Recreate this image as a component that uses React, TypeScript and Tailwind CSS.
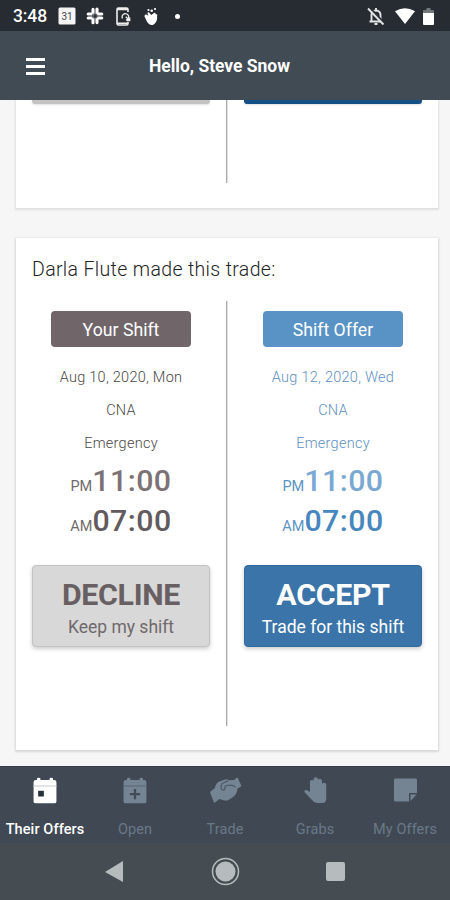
import React from "react";

type Tone = "gray" | "blue";

const toneStyles = {
  gray: { badge: "bg-[#70666a]", text: "text-[#4a4748]", first: "text-[#7c7276]", second: "text-[#625b5d]", tag: "text-[#6f6b6c]" },
  blue: { badge: "bg-[#5993c5]", text: "text-[#5e90c2]", first: "text-[#79a9d2]", second: "text-[#4787be]", tag: "text-[#5b93c5]" },
};

function StatusBar() {
  return (
    <div className="flex h-[31px] shrink-0 items-center bg-[#262c32] pl-[13px] pr-[16px] pt-px text-white">
      <span className="w-[45px] pt-px text-[17.5px] font-medium leading-none tracking-[-0.1px]">3:48</span>
      <svg className="h-[18px] w-[18px]" viewBox="0 0 18 18">
        <rect x="0.5" y="0.5" width="17" height="17" rx="1.5" fill="#f5f5f5" />
        <text x="9" y="12.7" fontSize="10" textAnchor="middle" fill="#444a50">31</text>
      </svg>
      <svg className="ml-[10px] h-[18px] w-[18px]" viewBox="0 0 18 18" fill="none" stroke="#fff" strokeWidth="3.1" strokeLinecap="round">
        <path d="M7 2.4v4.6M2.2 7H7M11 7V2M11 7h4.8M7 11H2.2M7 11v4.8M11 11h4.8M11 11v4.6" />
        <path d="M7.2 7.2h3.6v3.6H7.2z" stroke="#262c32" strokeWidth=".8" />
      </svg>
      <svg className="ml-[12px] h-[19px] w-[15px]" viewBox="0 0 15 19" fill="none" stroke="#eee" strokeWidth="1.6">
        <path d="M12 5V2.5Q12 1 10.5 1h-8Q1 1 1 2.5v14Q1 18 2.5 18h8q1.5 0 1.5-1.5V15M1 2.5h11M1 16.3h11" />
        <path d="M6.5 11.5a3.3 3.3 0 1 1 3.5 1.7M9.8 9.8l3.7 3.7M13.7 10.5v3h-3" strokeWidth="1.3" />
      </svg>
      <svg className="ml-[13px] h-[19px] w-[14px]" viewBox="0 0 14 19" fill="#fff">
        <path d="M.5 9.500C.5 7.500 2.300 7 3.500 8.200L4.500 9 3.500 6.500c-.3-1.400 1.500-1.800 2-.6L7.200 8l2.800-2c1.100-.8 2 .3 1.500 1.300l1 0c1 .3.900 1.300.5 2 .6 3.400-.9 7-3.700 8.500-3 .7-5.200-.8-6.400-3.200z" />
        <circle cx="4.500" cy="3" r="1.100" /><circle cx="7.700" cy="3.800" r="1.300" /><circle cx="11" cy="2" r="1.100" />
      </svg>
      <span className="ml-[17px] size-[5px] rounded-full bg-white" />
      <svg className="ml-auto h-[19px] w-[18px]" viewBox="0 0 18 19" fill="none" stroke="#e2e3e4" strokeWidth="1.9">
        <path d="M4.5 14V8q0-4 4.5-4.5Q13.500 4 13.500 8v6M2.500 14.500h13M9 1v3M7.500 17h3" />
        <path d="M3 1l15 16" stroke="#262c32" strokeWidth="2" /><path d="M1 1.500l15.500 16" />
      </svg>
      <svg className="ml-[10px] h-[16px] w-[20px]" viewBox="0 0 20 16" fill="#fff"><path d="M0 3.300Q10-3 20 3.300L10 16z" /></svg>
      <svg className="ml-[8px] h-[17px] w-[11px]" viewBox="0 0 11 17">
        <path d="M3.500 0h4v2H10q1 0 1 1v3H0V3q0-1 1-1h2.500z" fill="#72777a" /><path d="M0 5h11v11q0 1-1 1H1q-1 0-1-1z" fill="#fff" />
      </svg>
    </div>
  );
}

function Header() {
  return (
    <header className="flex h-[69px] shrink-0 items-center bg-[#414b53] pl-[26px] pt-px text-white">
      <div className="flex flex-col gap-[4px]">
        <span className="h-[3px] w-[19px] bg-white" /><span className="h-[3px] w-[19px] bg-white" /><span className="h-[3px] w-[19px] bg-white" />
      </div>
      <h1 className="ml-[104px] pt-[2px] text-[17.5px] font-bold leading-none tracking-[-0.03px]">Hello, Steve Snow</h1>
    </header>
  );
}

function Divider({ height }: { height: string }) {
  return <div className={`w-px shrink-0 bg-[#acacac] shadow-[1px_0_0_#dedede] ${height}`} />;
}

function Shift({ tone, title, date }: { tone: Tone; title: string; date: string }) {
  const s = toneStyles[tone];
  const blue = tone === "blue";
  return (
    <div className={`flex flex-col items-center pt-[10px] ${blue ? "ml-px w-[210px]" : "w-[210px]"} ${s.text}`}>
      <div className={`flex h-[36px] w-[140px] items-center justify-center rounded-[4px] pt-[2px] text-[17.7px] text-white ${s.badge}`}>{title}</div>
      <div className="mt-[14px] flex flex-col items-center text-[14.5px] font-light leading-[33px] tracking-[0.27px]">
        <span>{date}</span><span>CNA</span><span>Emergency</span>
      </div>
      <div className="flex flex-col font-medium">
        <Time tag="PM" value="11:00" color={s.first} tagColor={s.tag} />
        <Time tag="AM" value="07:00" color={s.second} tagColor={s.tag} />
      </div>
      <button className={`mt-[25px] flex h-[82px] w-[178px] flex-col items-center rounded-[4px] border ${blue ? "border-[#306b9f] bg-[#3a74a9] text-white" : "border-[#c2c2c2] bg-[#d8d8d8] text-[#70696b]"} pt-[11px] shadow-[0_2px_4px_#0003]`}>
        <span className={`text-[30.3px] font-bold leading-[36px] tracking-[-0.3px] ${blue ? "" : "text-[#685f62]"}`}>{blue ? "ACCEPT" : "DECLINE"}</span>
        <span className="mt-[2px] text-[17.5px] leading-[24px]">{blue ? "Trade for this shift" : "Keep my shift"}</span>
      </button>
    </div>
  );
}

function Time({ tag, value, color, tagColor }: { tag: string; value: string; color: string; tagColor: string }) {
  return (
    <div className="flex h-[40px] items-baseline justify-center leading-[41px]">
      <span className={`text-[14.5px] font-normal ${tagColor}`}>{tag}</span>
      <span className={`text-[30.3px] tracking-[0.5px] ${color}`}>{value}</span>
    </div>
  );
}

const calendar = <path d="M5 4V3q0-1 1.500-1T8 3v1h8V3q0-1 1.500-1T19 3v1h1q2 0 2 2v17q0 1.500-2 1.500H4q-2 0-2-1.500V6q0-2 2-2z" />;

function TabIcon({ name }: { name: string }) {
  if (name === "Trade") {
    return <svg className="h-[26px] w-[33px]" viewBox="0 0 33 27" fill="currentColor">
      <path d="M.7 16.500Q.2 15.500 1 15l4.500-3.500Q6.500 5.500 11 4.300L16 2.500q2.500-.5 4 1l5.500-.5L28 .8q.8-.5 1.300.3l3.400 7.500q.4 1-.4 1.400L29 12q-.5 6-5 9l-4 2.500q-3 1.800-6 .3l-4-1-4 3.500q-1 .8-1.500-.2z" />
      <path d="M19 4l-4.500 2Q12 7 12 9.500v2.200q.3 2 2 2 1.800-.2 2-2.200V9.800l3-1.200h4.500q2 .2 3 2" fill="none" stroke="#4d5a67" strokeWidth="1.300" strokeLinecap="round" strokeLinejoin="round" />
    </svg>;
  }
  if (name === "Grabs") {
    return <svg className="h-[26px] w-[23px]" viewBox="0 0 23 26" fill="currentColor"><path d="M6 15V5q0-2 1.800-2Q9 3 9.500 3.800V2Q10 .2 11.700.2T14 2v1q.5-1.200 2-1.200T18 4v3q.5-1.200 2.200-1.200T22.200 8v14q0 4-4 4H13q-3 0-5-3L.5 15q-.5-2.500 2.500-1.800z" /></svg>;
  }
  if (name === "My Offers") {
    return <svg className="h-[24px] w-[23px]" viewBox="0 0 23 24" fill="currentColor"><path d="M0 2Q0 .5 1.500.5h20Q23 .5 23 2v13h-8v8.500H1.500Q0 23.500 0 22z" /><path d="M16.500 16.500H22.500L16.500 23z" /></svg>;
  }
  return <svg className="h-[27px] w-[24px]" viewBox="1.500 1.500 21 23.500" fill="currentColor">{calendar}
    <path d="M2 9.300h20" stroke={name === "Open" ? "#5c6978" : "#ccd0d4"} />
    {name === "Open" ? <path d="M12 12v9M7.500 16.500h9" fill="none" stroke="#414b55" strokeWidth="2" /> : <path d="M6 13.500h5v5H6z" fill="#26313c" />}
  </svg>;
}

function BottomTabs() {
  return <nav className="grid h-[77px] shrink-0 grid-cols-5 border-t border-[#343e47] bg-[#404953]">
    {["Their Offers", "Open", "Trade", "Grabs", "My Offers"].map((name, i) => (
      <div key={name} className={`flex flex-col items-center pt-[7px] text-[14.5px] tracking-[0.1px] ${i === 0 ? "font-medium text-white" : "text-[#697888]"}`}>
        <div className={`flex h-[32px] items-center ${i === 0 ? "" : "text-[#758493]"}`}><TabIcon name={name} /></div>
        <span className="mt-[14px] whitespace-nowrap leading-[20px]">{name}</span>
      </div>
    ))}
  </nav>;
}

export default function App() {
  return (
    <div className="flex h-[900px] w-[450px] flex-col overflow-hidden bg-[#f6f6f6] font-['Roboto',sans-serif]">
      <StatusBar /><Header />
      <main className="min-h-0 flex-1 overflow-hidden pl-[16px] pr-[12px]">
        <section className="flex h-[108px] bg-white pl-[16px] shadow-[0_1px_2px_1px_#00000018]">
          <div className="mr-[16px] h-[4px] w-[178px] rounded-b-[3px] bg-[#c5c2c2] shadow-sm" />
          <Divider height="h-[83px]" />
          <div className="ml-[17px] h-[4px] w-[178px] rounded-b-[3px] bg-[#145086] shadow-sm" />
        </section>
        <section className="mt-[30px] h-[512px] bg-white pt-[18px] shadow-[0_1px_2px_1px_#00000020]">
          <h2 className="ml-[16px] pt-px text-[19.5px] font-light leading-[26px] tracking-[0.35px] text-[#242424]">Darla Flute made this trade:</h2>
          <div className="mt-[18px] flex">
            <Shift tone="gray" title="Your Shift" date="Aug 10, 2020, Mon" />
            <Divider height="h-[425px]" />
            <Shift tone="blue" title="Shift Offer" date="Aug 12, 2020, Wed" />
          </div>
        </section>
      </main>
      <BottomTabs />
      <div className="flex h-[57px] shrink-0 items-center justify-center bg-[#454d52] pb-px text-[#b6bcbe]">
        <svg className="h-[21px] w-[19px]" viewBox="0 0 19 21" fill="currentColor"><path d="M18 0v21L0 11z" /></svg>
        <svg className="ml-[87px] size-[29px]" viewBox="0 0 29 29" fill="currentColor"><circle cx="14.500" cy="14.500" r="13" fill="none" stroke="currentColor" strokeWidth="1.500" /><circle cx="14.500" cy="14.500" r="10" /></svg>
        <span className="ml-[86px] size-[19px] rounded-[2px] bg-current" />
      </div>
    </div>
  );
}
